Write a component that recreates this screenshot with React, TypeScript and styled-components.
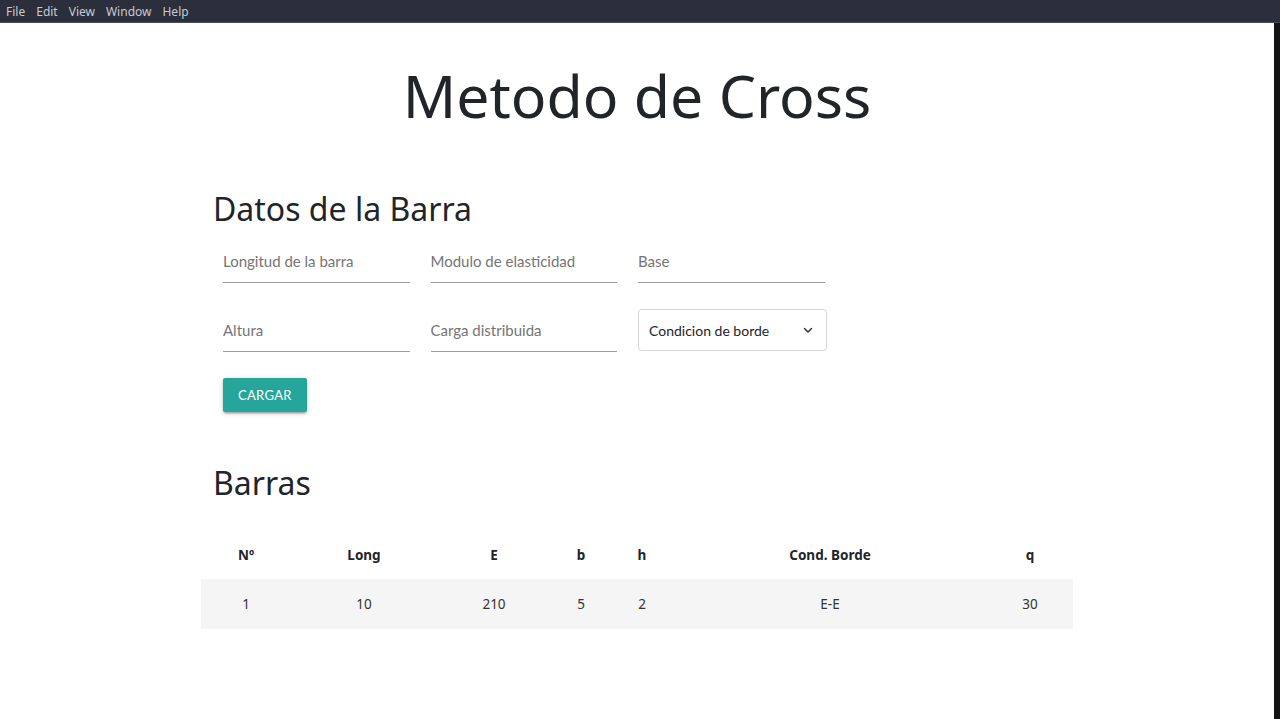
// @ts-nocheck
import React, { useState } from 'react';
import styled, { createGlobalStyle } from 'styled-components';

const GlobalStyle = createGlobalStyle`
  html, body {
    margin: 0;
    padding: 0;
    height: 100%;
    background: #121212;
  }
  body {
    font-family: "Noto Sans", "Open Sans", sans-serif;
    color: #212529;
    overflow: hidden;
  }
  * { box-sizing: border-box; }
`;

const Shell = styled.div`
  display: flex;
  flex-direction: column;
  width: 1280px;
  height: 719px;
`;

const MenuBar = styled.div`
  display: flex;
  align-items: center;
  gap: 11px;
  height: 23px;
  padding: 0 6px;
  background: #2b2e3b;
  border-bottom: 1px solid #4a4d57;
`;

const MenuItem = styled.span`
  font-family: "Noto Sans", sans-serif;
  font-size: 12px;
  color: #c9cbd1;
`;

const Body = styled.div`
  flex: 1;
  display: flex;
`;

const Page = styled.main`
  width: 1274px;
  background: #ffffff;
  display: flex;
  flex-direction: column;
  align-items: center;
`;

const Edge = styled.div`
  flex: 1;
  background: #141414;
`;

const Title = styled.h1`
  margin: 37px 0 0;
  font-family: "Noto Sans", sans-serif;
  font-size: 59px;
  font-weight: 400;
  line-height: 1.2;
  color: #212529;
`;

const Container = styled.div`
  width: 872px;
  display: flex;
  flex-direction: column;
`;

const SectionTitle = styled.h2`
  margin: ${p => p.top}px 0 0 12px;
  font-family: "Noto Sans", sans-serif;
  font-size: 32px;
  font-weight: 400;
  line-height: 1.2;
  color: #212529;
`;

const Form = styled.div`
  display: grid;
  grid-template-columns: repeat(3, 207.5px);
  row-gap: 27px;
  margin: 13px 0 0 11.5px;
`;

const Field = styled.div`
  padding: 0 10.5px;
  display: flex;
  align-items: flex-end;
  height: 42px;
`;

const Input = styled.input`
  width: 100%;
  height: 42px;
  border: none;
  border-bottom: 1px solid #9e9e9e;
  outline: none;
  padding: 0 0 1px;
  font-family: "Lato", sans-serif;
  font-size: 15px;
  color: #212529;
  background: transparent;

  &::placeholder {
    color: #757575;
  }
`;

const SelectBox = styled.div`
  flex-shrink: 0;
  width: 189px;
  height: 42px;
  margin-bottom: 1px;
  border: 1px solid #d6d6d6;
  border-radius: 4px;
  display: flex;
  align-items: center;
  justify-content: space-between;
  padding: 0 12px 0 10px;
  font-family: "Lato", sans-serif;
  font-size: 14px;
  color: #212529;
`;

const Actions = styled.div`
  margin: 26px 0 0 22px;
`;

const Button = styled.button`
  height: 34px;
  padding: 0 15px;
  border: none;
  border-radius: 2px;
  background: #26a69a;
  color: #ffffff;
  font-family: "Lato", sans-serif;
  font-size: 13px;
  letter-spacing: 0.3px;
  text-transform: uppercase;
  box-shadow: 0 2px 2px 0 rgba(0,0,0,0.14), 0 3px 1px -2px rgba(0,0,0,0.12), 0 1px 5px 0 rgba(0,0,0,0.2);
  cursor: pointer;
`;

const Table = styled.table`
  width: 872px;
  margin-top: 28px;
  border-collapse: collapse;
  table-layout: fixed;
  font-family: "Noto Sans", sans-serif;
  font-size: 13.5px;
`;

const Th = styled.th`
  height: 48px;
  text-align: center;
  font-weight: 700;
  color: #212529;
`;

const Row = styled.tr`
  background: ${p => (p.striped ? '#f5f5f5' : 'transparent')};
`;

const Td = styled.td`
  height: 50px;
  text-align: center;
  color: #333;
`;

const columns = [
  { label: 'Nº', width: 90 },
  { label: 'Long', width: 146 },
  { label: 'E', width: 114 },
  { label: 'b', width: 60 },
  { label: 'h', width: 62 },
  { label: 'Cond. Borde', width: 314 },
  { label: 'q', width: 86 },
];

const barras = [{ n: 1, long: 10, e: 210, b: 5, h: 2, cond: 'E-E', q: 30 }];

const App = () => {
  const [rows] = useState(barras);

  return (
    <Shell>
      <GlobalStyle />
      <MenuBar>
        {['File', 'Edit', 'View', 'Window', 'Help'].map(m => (
          <MenuItem key={m}>{m}</MenuItem>
        ))}
      </MenuBar>
      <Body>
        <Page>
          <Title>Metodo de Cross</Title>
          <Container>
            <SectionTitle top={59}>Datos de la Barra</SectionTitle>
            <Form>
              <Field><Input placeholder="Longitud de la barra" /></Field>
              <Field><Input placeholder="Modulo de elasticidad" /></Field>
              <Field><Input placeholder="Base" /></Field>
              <Field><Input placeholder="Altura" /></Field>
              <Field><Input placeholder="Carga distribuida" /></Field>
              <Field>
                <SelectBox>
                  <span>Condicion de borde</span>
                  <svg width="12" height="12" viewBox="0 0 12 12">
                    <path d="M2.5 4.5 L6 8 L9.5 4.5" fill="none" stroke="#333" strokeWidth="1.5" strokeLinecap="round" strokeLinejoin="round" />
                  </svg>
                </SelectBox>
              </Field>
            </Form>
            <Actions>
              <Button>Cargar</Button>
            </Actions>
            <SectionTitle top={52}>Barras</SectionTitle>
            <Table>
              <colgroup>
                {columns.map(c => <col key={c.label} style={{ width: c.width }} />)}
              </colgroup>
              <thead>
                <tr>
                  {columns.map(c => <Th key={c.label}>{c.label}</Th>)}
                </tr>
              </thead>
              <tbody>
                {rows.map((r, i) => (
                  <Row key={r.n} striped={i % 2 === 0}>
                    <Td>{r.n}</Td>
                    <Td>{r.long}</Td>
                    <Td>{r.e}</Td>
                    <Td>{r.b}</Td>
                    <Td>{r.h}</Td>
                    <Td>{r.cond}</Td>
                    <Td>{r.q}</Td>
                  </Row>
                ))}
              </tbody>
            </Table>
          </Container>
        </Page>
        <Edge />
      </Body>
    </Shell>
  );
};

export default App;
